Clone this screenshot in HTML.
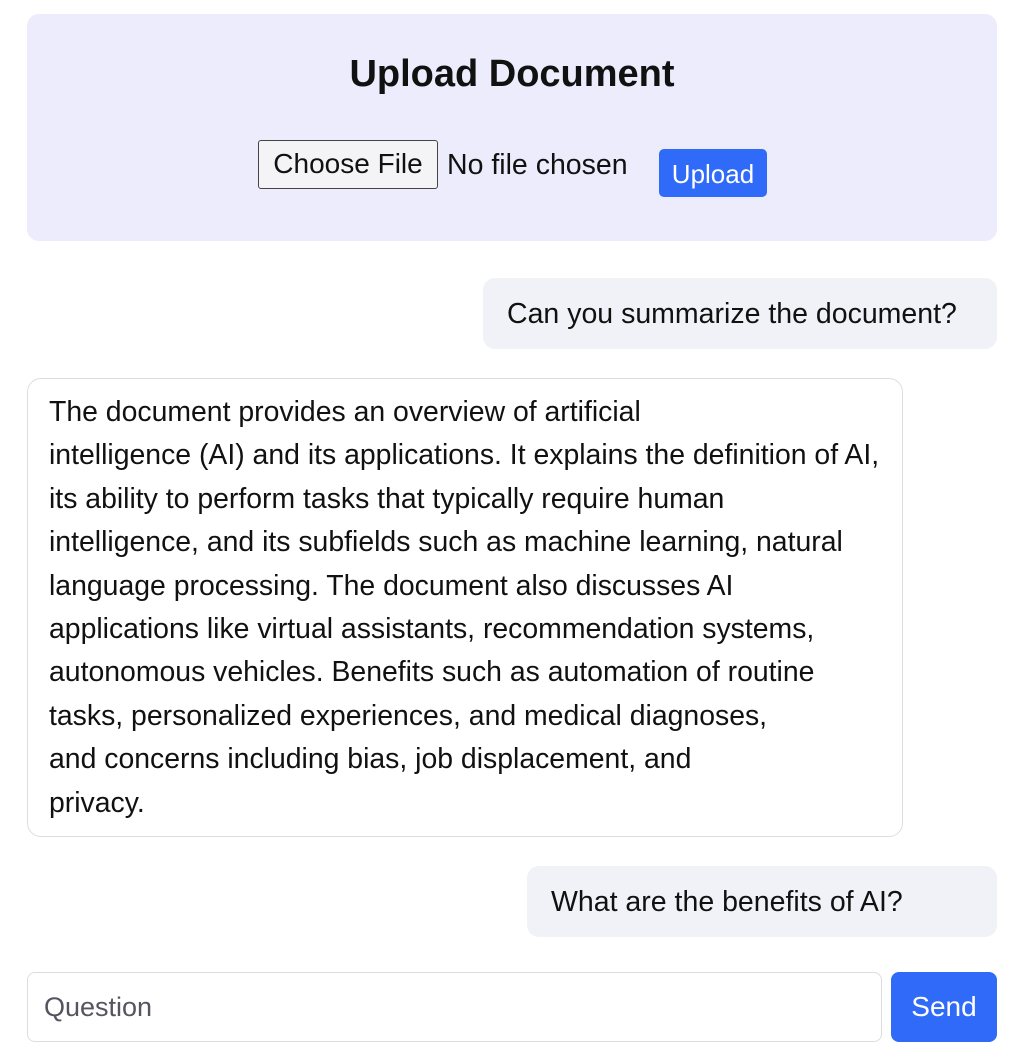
<!DOCTYPE html>
<html><head><style>
body{margin:0;width:1024px;height:1024px;overflow:hidden;background:#fff;font-family:"Liberation Sans",sans-serif;color:#111;position:relative}
.a{position:absolute}
</style></head><body>
<div class="a" style="left:27px;top:14px;width:970px;height:227px;background:#ececfc;border-radius:12px"></div>
<div class="a" style="left:0;width:1024px;top:53px;text-align:center;font-size:38px;font-weight:bold;color:#111">Upload Document</div>
<div class="a" style="left:258px;top:140px;width:180px;height:49px;border:1.5px solid #444;border-radius:3px;background:#f4f4f6;box-sizing:border-box;font-size:28px;line-height:46px;text-align:center">Choose File</div>
<div class="a" style="left:447px;top:149px;font-size:28.5px">No file chosen</div>
<div class="a" style="left:659px;top:149px;width:108px;height:48px;background:#2f6af8;border-radius:5px;color:#fff;font-size:26px;line-height:50px;text-align:center">Upload</div>
<div class="a" style="left:483px;top:278px;width:514px;height:71px;background:#f1f2f7;border-radius:12px;font-size:28.5px;line-height:73px;box-sizing:border-box;padding-left:24px">Can you summarize the document?</div>
<div class="a" style="left:27px;top:378px;width:876px;height:459px;border:1.5px solid #dcdde2;border-radius:14px;box-sizing:border-box"></div>
<div class="a" style="left:49px;top:391px;font-size:28.4px;line-height:43.4px;white-space:nowrap">The document provides an overview of artificial<br>intelligence (AI) and its applications. It explains the definition of AI,<br>its ability to perform tasks that typically require human<br>intelligence, and its subfields such as machine learning, natural<br>language processing. The document also discusses AI<br>applications like virtual assistants, recommendation systems,<br>autonomous vehicles. Benefits such as automation of routine<br>tasks, personalized experiences, and medical diagnoses,<br>and concerns including bias, job displacement, and<br>privacy.</div>
<div class="a" style="left:527px;top:866px;width:470px;height:71px;background:#f1f2f7;border-radius:12px;font-size:28.5px;line-height:73px;box-sizing:border-box;padding-left:24px">What are the benefits of AI?</div>
<div class="a" style="left:27px;top:972px;width:855px;height:70px;border:1.5px solid #dcdde2;border-radius:8px;box-sizing:border-box"></div>
<div class="a" style="left:44px;top:992px;font-size:27px;color:#555560">Question</div>
<div class="a" style="left:891px;top:972px;width:106px;height:70px;background:#2f6af8;border-radius:8px;color:#fff;font-size:28px;text-align:center;box-sizing:border-box;padding-top:19px">Send</div>
</body></html>
